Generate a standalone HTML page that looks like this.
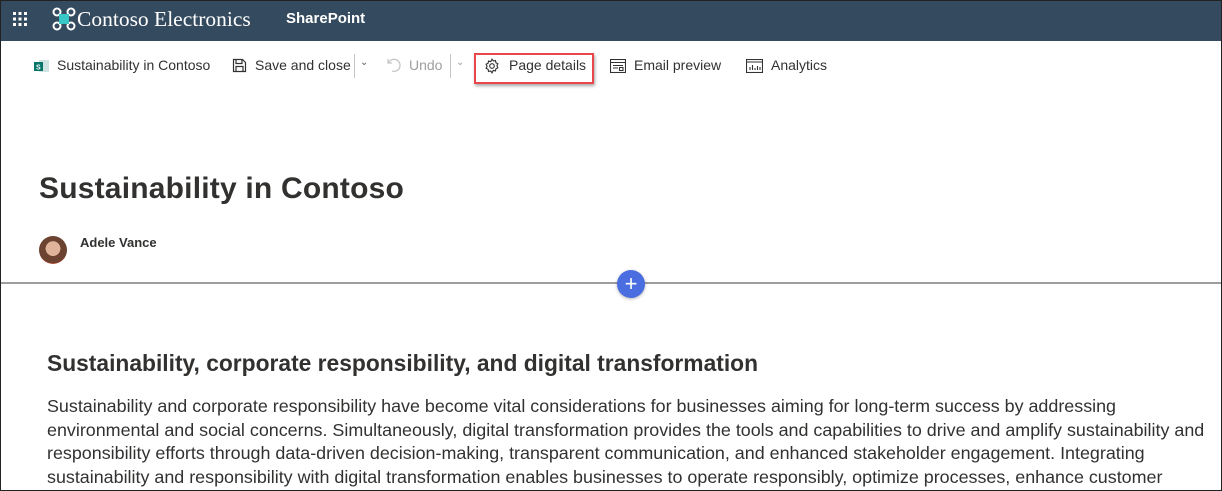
<!DOCTYPE html>
<html><head><meta charset="utf-8"><style>
*{margin:0;padding:0;box-sizing:border-box}
body{width:1222px;height:491px;overflow:hidden;background:#fff;font-family:"Liberation Sans",sans-serif;color:#323130;position:relative}
.frame{position:absolute;inset:0;border:1px solid #222;pointer-events:none;z-index:9}
.top{position:absolute;left:0;top:0;width:1222px;height:41px;background:#344a5e;color:#fff}
.abs{position:absolute;white-space:nowrap}
.cmd{font-size:14px;color:#323130;top:57px}
p{font-size:17.9px;line-height:23.6px;color:#323130}
</style></head><body>
<div class="top">
  <svg class="abs" style="left:12px;top:11px" width="16" height="16" viewBox="0 0 16 16" fill="#fff">
    <rect x="1" y="1" width="3" height="3"/><rect x="6.5" y="1" width="3" height="3"/><rect x="12" y="1" width="3" height="3"/>
    <rect x="1" y="6.5" width="3" height="3"/><rect x="6.5" y="6.5" width="3" height="3"/><rect x="12" y="6.5" width="3" height="3"/>
    <rect x="1" y="12" width="3" height="3"/><rect x="6.5" y="12" width="3" height="3"/><rect x="12" y="12" width="3" height="3"/>
  </svg>
  <svg class="abs" style="left:52px;top:7px" width="24" height="24" viewBox="0 0 24 24" fill="none" stroke="#fff" stroke-width="2">
    <circle cx="5" cy="5" r="3.5"/><circle cx="19" cy="5" r="3.5"/><circle cx="5" cy="19" r="3.5"/><circle cx="19" cy="19" r="3.5"/>
    <rect x="7" y="7" width="10" height="10" fill="#38c6c6" stroke="none"/>
  </svg>
  <div class="abs" style="left:77px;top:7px;font-family:'Liberation Serif',serif;font-size:21.5px">Contoso Electronics</div>
  <div class="abs" style="left:286px;top:10px;font-size:15px;font-weight:bold">SharePoint</div>
</div>
<svg class="abs" style="left:34px;top:59px" width="16" height="14" viewBox="0 0 16 14"><rect x="5" y="1" width="10" height="12" fill="#cfe3e3"/><rect x="0" y="3" width="9" height="9" fill="#077568"/><text x="2" y="10.5" font-size="7" fill="#fff" font-family="Liberation Sans" font-weight="bold">S</text></svg>
<div class="abs cmd" style="left:57px">Sustainability in Contoso</div>
<svg class="abs" style="left:232px;top:58px" width="15" height="15" viewBox="0 0 15 15" fill="none" stroke="#323130" stroke-width="1.2"><path d="M1.5 1.5h9l3 3v9h-12z"/><path d="M4 1.5v4h6v-4M4 13.5v-5h7v5"/></svg>
<div class="abs cmd" style="left:255px">Save and close</div>
<div class="abs" style="left:354px;top:54px;width:1px;height:24px;background:#c8c6c4"></div>
<div class="abs" style="left:360px;top:57px;font-size:10px;color:#605e5c">⌄</div>
<svg class="abs" style="left:386px;top:57px" width="16" height="16" viewBox="0 0 16 16" fill="none" stroke="#c8c6c4" stroke-width="1.3"><path d="M2 2v4h4M2.5 6A6 6 0 1 1 6 14"/></svg>
<div class="abs cmd" style="left:409px;color:#a19f9d">Undo</div>
<div class="abs" style="left:450px;top:54px;width:1px;height:24px;background:#c8c6c4"></div>
<div class="abs" style="left:456px;top:57px;font-size:10px;color:#a19f9d">⌄</div>
<div class="abs" style="left:474px;top:53px;width:120px;height:31px;border:2px solid #e8474b;box-shadow:1px 2px 3px rgba(0,0,0,.35)"></div>
<svg class="abs" style="left:484px;top:58px" width="16" height="16" viewBox="0 0 16 16" fill="none" stroke="#323130" stroke-width="1.1"><circle cx="8" cy="8" r="2.3"/><path d="M8 1.2l1.3 1.8 2.2-.5.4 2.2 2 1-1 2 1 2-2 1-.4 2.2-2.2-.5L8 14.8l-1.3-1.8-2.2.5-.4-2.2-2-1 1-2-1-2 2-1 .4-2.2 2.2.5z"/></svg>
<div class="abs cmd" style="left:509px">Page details</div>
<svg class="abs" style="left:610px;top:59px" width="16" height="14" viewBox="0 0 16 14" fill="none" stroke="#323130" stroke-width="1.1"><rect x=".5" y=".5" width="15" height="13"/><path d="M.5 3.5h15M3 6.5h10M3 9h5M9.5 8.5h3.5v3h-3.5z"/></svg>
<div class="abs cmd" style="left:634px">Email preview</div>
<svg class="abs" style="left:746px;top:59px" width="17" height="14" viewBox="0 0 17 14" fill="none" stroke="#323130" stroke-width="1.1"><rect x=".5" y=".5" width="16" height="13"/><path d="M.5 3h16M4 11V8M6.5 11V6M9 11V9M11.5 11V7M14 11V8"/></svg>
<div class="abs cmd" style="left:771px">Analytics</div>
<div class="abs" style="left:39px;top:172px;font-size:30px;font-weight:bold;color:#323130;letter-spacing:.2px">Sustainability in Contoso</div>
<div class="abs" style="left:39px;top:236px;width:28px;height:28px;border-radius:50%;background:radial-gradient(circle at 50% 45%,#e0b49a 0 35%,#6b4330 36% 70%,#c0452a 71%)"></div>
<div class="abs" style="left:80px;top:235px;font-size:13px;font-weight:bold;color:#323130">Adele Vance</div>
<div class="abs" style="left:0;top:282px;width:1222px;height:2px;background:#9d9d9d"></div>
<div class="abs" style="left:617px;top:270px;width:28px;height:28px;border-radius:50%;background:#4a6de0;color:#fff;font-size:22px;line-height:27px;text-align:center;box-shadow:0 1px 3px rgba(0,0,0,.3)">+</div>
<div class="abs" style="left:47px;top:350px;font-size:22.8px;font-weight:bold;color:#323130">Sustainability, corporate responsibility, and digital transformation</div>
<div class="abs" style="left:47px;top:395px;width:1200px;white-space:normal">
<p>Sustainability and corporate responsibility have become vital considerations for businesses aiming for long-term success by addressing<br>environmental and social concerns. Simultaneously, digital transformation provides the tools and capabilities to drive and amplify sustainability and<br>responsibility efforts through data-driven decision-making, transparent communication, and enhanced stakeholder engagement. Integrating<br>sustainability and responsibility with digital transformation enables businesses to operate responsibly, optimize processes, enhance customer</p>
</div>
<div class="frame"></div>
</body></html>
